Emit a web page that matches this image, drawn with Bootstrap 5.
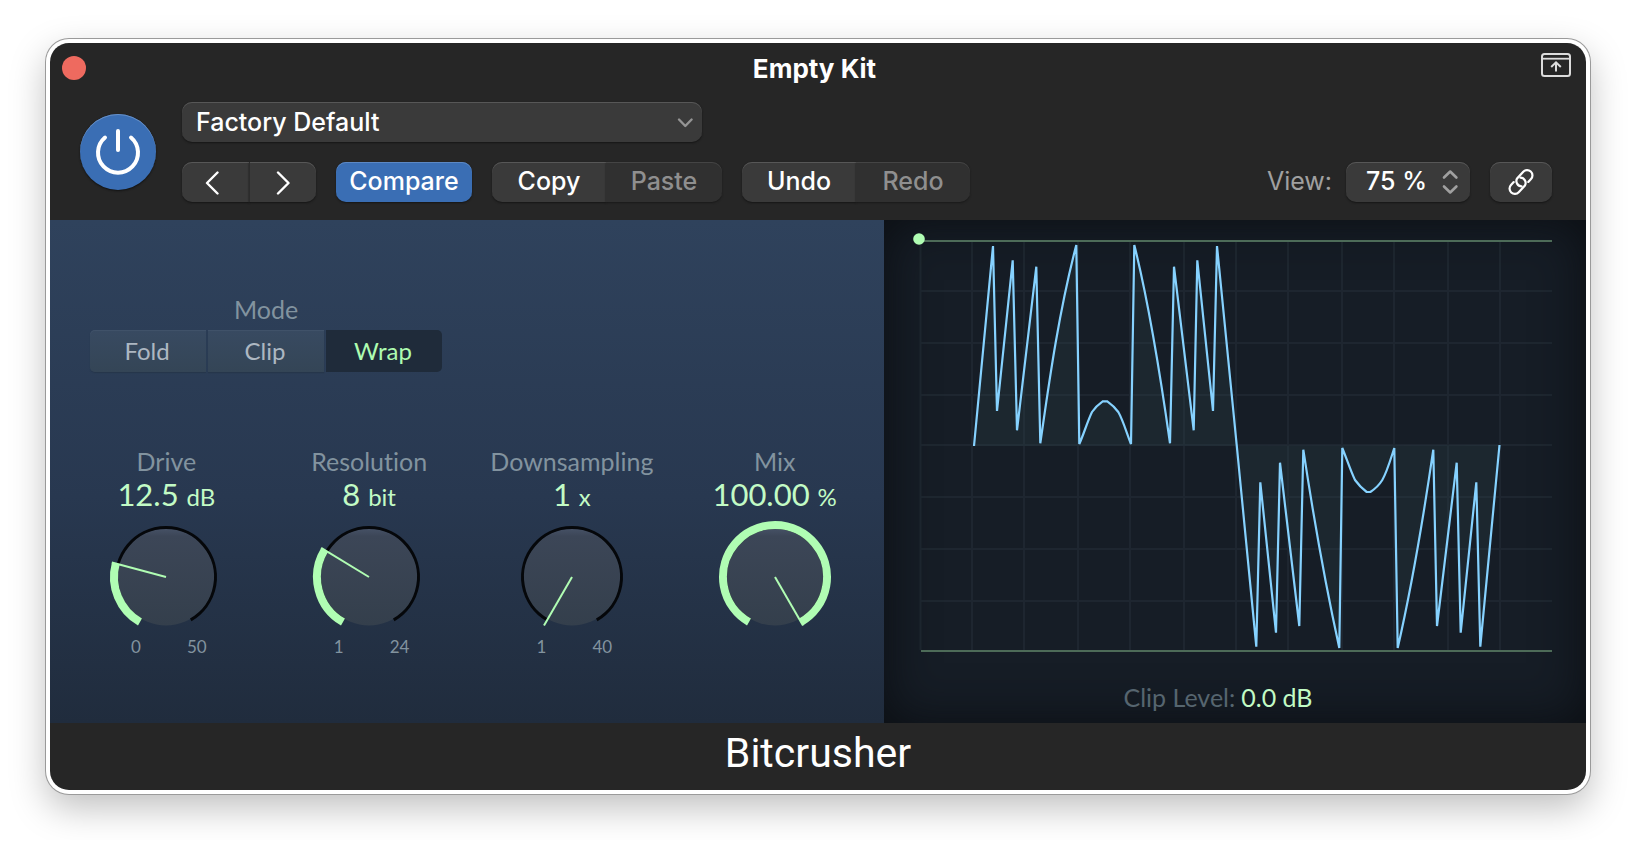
<!DOCTYPE html>
<html lang="en">
<head>
<meta charset="utf-8">
<meta name="viewport" content="width=device-width, initial-scale=1">
<title>Bitcrusher</title>
<link href="https://cdn.jsdelivr.net/npm/bootstrap@5.3.0/dist/css/bootstrap.min.css" rel="stylesheet">
<style>
body{background:#fff;font-family:Inter,"Liberation Sans",sans-serif;font-size:25px;line-height:32px;color:#fff}
.plugin{margin:43px 50px 50px;border-radius:19px;background:#262626;box-shadow:0 0 0 4px #fff,0 0 0 5px #9a9a9a,0 14px 36px 4px rgba(0,0,0,.25)}
.bare{border:0;padding:0;background:none;color:inherit;line-height:0}
.titlebar{display:grid;grid-template-columns:1fr auto 1fr;align-items:center;height:50px;padding:0 15px 0 12px}
.titlebar h1{font-size:26px;line-height:32px;font-weight:700;padding-top:2px}
.close-dot{width:24px;height:24px;border-radius:50%;background:#ee6a5f}
.popout{padding-bottom:6px}
.toolbar{padding:9px 34px 18px 30px;column-gap:26px}
.toolbar-rows{gap:20px}
.power{width:76px;height:76px;border-radius:50%;background:#3a6eb4;box-shadow:inset 0 1px 0 #6790c7,0 1px 2px #111}
.ctl{height:40px;border:0;border-radius:10px;background:#3a3a3a;color:#fff;font-size:25px;line-height:32px;font-weight:500;padding:3px 0 5px;box-shadow:inset 0 1px 0 #575757,0 1px 2px #151515;text-align:center}
.ctl:disabled{background:#303030;color:#8f8f8f;opacity:1;box-shadow:inset 0 1px 0 #444,0 1px 2px #191919}
.ctl.blue{background:#3a6eb4;box-shadow:inset 0 1px 0 #5c88c4,0 1px 2px #151515;width:136px}
.btn-group .ctl:first-child{border-radius:10px 0 0 10px}
.btn-group .ctl:last-child{border-radius:0 10px 10px 0}
.w-nav{width:67px}.w-edit{width:114px}.w-paste{width:116px}
.nav-pair .ctl + .ctl{border-left:1px solid #2c2c2c}
.nav-pair .ctl{padding:0 2px 2px 0}
select.ctl{appearance:none;text-align:left}
.preset{width:520px}
.preset select{padding:4px 40px 4px 14px}
.zoomsel{width:124px}
.zoomsel select{padding:3px 30px 5px 20px}
.linkbtn{width:62px;padding:0}
.view-box{gap:14px}
.over{position:absolute;pointer-events:none;top:0;right:0}
.dim{color:#a0a0a0;padding-bottom:2px}
.screen{display:grid;grid-template-columns:834fr 702fr;font-family:Lato,"Liberation Sans",sans-serif;font-variant-ligatures:none;font-size:25px;line-height:28px;color:#82939f}
.left{background:linear-gradient(#2f425c,#283850 55%,#202c3d);padding:75px 8px 66px 15px}
.right{background:#161d26;box-shadow:inset 0 0 50px #0b0e12;color:#56656f}
.mode{width:352px;margin:0 0 75px 25px;gap:7px}
.seg{gap:2px;font-size:24px}
.seg label{flex:1;height:42px;padding:7px 2px 7px 0;background:linear-gradient(#384a61,#344556);color:#adb7c2;text-align:center;box-shadow:inset 0 1px 0 #405269,0 1px 1px #26364b}
.seg label:first-of-type{border-radius:5px 0 0 5px}
.seg label:last-of-type{border-radius:0 5px 5px 0}
.seg .btn-check:checked + label{background:#1f2b3a;color:#aefcb0;box-shadow:none}
.knobs{display:grid;grid-template-columns:repeat(4,1fr)}
.knob{position:relative}
.knob svg{display:block;margin:7px auto 0}
.knob input{position:absolute;inset:0;width:100%;height:100%;opacity:0;margin:0}
.val{height:32px;font-size:31px;line-height:32px;color:#c2fbc5;margin-top:3px}
.val span{font-size:24px}
.scale{width:122px;margin:0 auto;font-size:17px;line-height:20px}
.green{color:#c2fbc5}
.plot{display:block;width:100%;height:auto}
.clip{padding:0 34px 11px 0;gap:6px}
.foot{height:67px;font-family:Roboto,"Liberation Sans",sans-serif;font-size:41px;line-height:60px}
</style>
</head>
<body>
<main class="plugin">
  <header>
    <div class="titlebar">
      <button class="bare close-dot" type="button" aria-label="Close"></button>
      <h1 class="mb-0 pe-1">Empty Kit</h1>
      <button class="bare popout ms-auto" type="button" aria-label="Pop out"><svg width="30" height="24" viewBox="0 0 30 24" fill="none" stroke="#dcdcdc" stroke-width="2"><rect x="1" y="1" width="28" height="22" rx="2.5"/><path d="M1 5.7h28" stroke-width="1.8"/><path d="M15 18.500v-9M10.200 14 15 9.400 19.800 14"/></svg></button>
    </div>
    <div class="toolbar d-flex align-items-center">
      <button class="bare power flex-shrink-0" type="button" aria-label="Power"><svg width="76" height="76" viewBox="0 0 76 76" fill="none" stroke="#fff" stroke-width="4" stroke-linecap="round"><path d="M38 17v19"/><path d="M25 23.500A20 20 0 1 0 51 23.500"/></svg></button>
      <div class="toolbar-rows d-flex flex-column flex-grow-1">
        <div class="preset position-relative">
          <select class="ctl w-100 d-block" aria-label="Preset"><option>Factory Default</option></select>
          <svg class="over" width="34" height="40" viewBox="0 0 34 40" fill="none" stroke="#949494" stroke-width="2.400" stroke-linecap="round" stroke-linejoin="round"><path d="m11 17.500 6.300 6.500 6.300-6.500"/></svg>
        </div>
        <div class="toolbar-rows d-flex align-items-center">
          <div class="btn-group nav-pair">
            <button class="ctl w-nav" type="button" aria-label="Previous"><svg width="24" height="24" viewBox="0 0 24 24" fill="none" stroke="#fff" stroke-width="2.400" stroke-linecap="round" stroke-linejoin="round"><path d="M14.500 1.500 4 12 14.500 22.500"/></svg></button>
            <button class="ctl w-nav" type="button" aria-label="Next"><svg width="24" height="24" viewBox="0 0 24 24" fill="none" stroke="#fff" stroke-width="2.400" stroke-linecap="round" stroke-linejoin="round"><path d="M8 1.500 18.500 12 8 22.500"/></svg></button>
          </div>
          <button class="ctl blue" type="button">Compare</button>
          <div class="btn-group"><button class="ctl w-edit" type="button">Copy</button><button class="ctl w-paste" type="button" disabled>Paste</button></div>
          <div class="btn-group"><button class="ctl w-edit" type="button">Undo</button><button class="ctl w-edit" type="button" disabled>Redo</button></div>
          <div class="view-box d-flex align-items-center ms-auto">
            <label class="dim" for="view">View:</label>
            <div class="zoomsel position-relative">
              <select id="view" class="ctl w-100 d-block"><option>75 %</option></select>
              <svg class="over" width="40" height="40" viewBox="0 0 40 40" fill="none" stroke="#a0a0a0" stroke-width="2.600" stroke-linecap="round" stroke-linejoin="round"><path d="m14 15.500 6.200-6 6.200 6M14 24.500l6.200 6 6.200-6"/></svg>
            </div>
          </div>
          <button class="ctl linkbtn" type="button" aria-label="Link"><svg class="d-block mx-auto" width="30" height="30" viewBox="-15 -15 30 30" fill="none" stroke="#fff" stroke-width="2.200" stroke-linecap="round"><g transform="rotate(-47)"><path d="M-5-5.300H-9A5.300 5.300 0 0 0-9 5.300H0A5.300 5.300 0 0 0 2.800-3.400"/><path d="M5 5.300H9A5.300 5.300 0 0 0 9-5.300H0A5.300 5.300 0 0 0-2.800 3.400"/></g></svg></button>
        </div>
      </div>
    </div>
  </header>

  <section class="screen">
    <div class="left">
      <div class="mode d-flex flex-column">
        <div class="text-center">Mode</div>
        <div class="seg d-flex" role="radiogroup" aria-label="Mode">
          <input class="btn-check" type="radio" name="mode" id="fold"><label for="fold">Fold</label>
          <input class="btn-check" type="radio" name="mode" id="clip"><label for="clip">Clip</label>
          <input class="btn-check" type="radio" name="mode" id="wrap" checked><label for="wrap">Wrap</label>
        </div>
      </div>
      <svg width="0" height="0" class="position-absolute" aria-hidden="true"><defs>
        <linearGradient id="disc" x1="0" y1="0" x2="0" y2="1"><stop offset="0" stop-color="#465166"/><stop offset=".08" stop-color="#3c4657"/><stop offset="1" stop-color="#343f4c"/></linearGradient>
        <g id="dial"><circle cx="60" cy="60" r="48.500" fill="url(#disc)"/><path d="M35.250 102.870A49.500 49.500 0 1 1 84.750 102.870" fill="none" stroke="#05070a" stroke-width="3"/></g>
      </defs></svg>
      <div class="knobs text-center">
        <div class="knob">
          <label class="d-block" for="drive">Drive</label>
          <div class="val">12.5 <span>dB</span></div>
          <svg width="120" height="120" viewBox="0 0 120 120" fill="none" stroke="#b0fdb3"><use href="#dial" stroke="none"/><path d="M34 105.030A52 52 0 0 1 9.770 46.540" stroke-width="8"/><path d="M60 60 5.900 45.500" stroke-width="2"/></svg>
          <div class="scale row g-0"><span class="col">0</span><span class="col">50</span></div>
          <input id="drive" type="range" min="0" max="50" step="0.5" value="12.5">
        </div>
        <div class="knob">
          <label class="d-block" for="res">Resolution</label>
          <div class="val">8 <span>bit</span></div>
          <svg width="120" height="120" viewBox="0 0 120 120" fill="none" stroke="#b0fdb3"><use href="#dial" stroke="none"/><path d="M34 105.030A52 52 0 0 1 15.570 32.990" stroke-width="8"/><path d="M60 60 12.150 30.900" stroke-width="2"/></svg>
          <div class="scale row g-0"><span class="col">1</span><span class="col">24</span></div>
          <input id="res" type="range" min="1" max="24" value="8">
        </div>
        <div class="knob">
          <label class="d-block" for="down">Downsampling</label>
          <div class="val">1 <span>x</span></div>
          <svg width="120" height="120" viewBox="0 0 120 120" fill="none" stroke="#b0fdb3"><use href="#dial" stroke="none"/><path d="M60 60 32 108.500" stroke-width="2"/></svg>
          <div class="scale row g-0"><span class="col">1</span><span class="col">40</span></div>
          <input id="down" type="range" min="1" max="40" value="1">
        </div>
        <div class="knob">
          <label class="d-block" for="mix">Mix</label>
          <div class="val">100.00 <span>%</span></div>
          <svg width="120" height="120" viewBox="0 0 120 120" fill="none" stroke="#b0fdb3"><use href="#dial" stroke="none"/><path d="M34 105.030A52 52 0 1 1 86 105.030" stroke-width="8"/><path d="M60 60 88 108.500" stroke-width="2"/></svg>
          <input id="mix" type="range" min="0" max="100" value="100">
        </div>
      </div>
    </div>

    <div class="right">
      <svg class="plot" viewBox="884 220 702 463" fill="none" role="img" aria-label="Waveform">
        <path d="M920.500 242V650M972 242V650M1024 242V650M1078 242V650M1130 242V650M1184 242V650M1236 242V650M1288 242V650M1342 242V650M1394 242V650M1448 242V650M1500 242V650M920 291H1552M920 343H1552M920 395H1552M920 445H1552M920 497H1552M920 549H1552M920 601H1552" stroke="#8fa5b5" stroke-opacity=".07" stroke-width="2"/>
        <path d="M921 241H1552M921 651H1552" stroke="#4d6b58" stroke-width="2"/>
        <path d="M974 446 993 246 997 411 1012.700 260.300 1017 430.300 1036.300 266.700 1040.300 443.300C1048 390 1058 315 1076.300 245L1079.300 444C1083 436 1088 420 1092 412Q1096 406 1102.700 401.300H1107.300Q1114 406 1118.300 412C1123 420 1127 434 1131 444L1134.300 245Q1152 316 1170 443.300L1174 266.700 1193.700 430.300 1197.300 260.300 1213 411 1217 246 1236.700 445 1256.300 646.700 1260.300 482.300 1276 632.700 1280 462.700 1299.300 626 1303.300 449.700Q1320 560 1339.300 648L1342.300 448C1346 457 1351 472 1355 480Q1360 487 1366.700 492H1370.300Q1378 487 1382.300 480C1387 472 1391 458 1394.300 448L1397.700 648Q1416 568 1433.300 449.700L1437 626 1456.700 462.700 1460.700 632.700 1476.300 482.300 1480.300 646.700 1499.500 445" fill="#3c5a5f" fill-opacity=".17" stroke="#86d2ff" stroke-width="2.200" stroke-linejoin="miter" stroke-miterlimit="3"/>
        <circle cx="919" cy="239" r="5.800" fill="#b0fdb3"/>
      </svg>
      <div class="clip d-flex justify-content-center"><span>Clip Level:</span><span class="green">0.0 dB</span></div>
    </div>
  </section>

  <footer class="foot text-center">Bitcrusher</footer>
</main>
<script src="https://cdn.jsdelivr.net/npm/bootstrap@5.3.0/dist/js/bootstrap.bundle.min.js"></script>
</body>
</html>
